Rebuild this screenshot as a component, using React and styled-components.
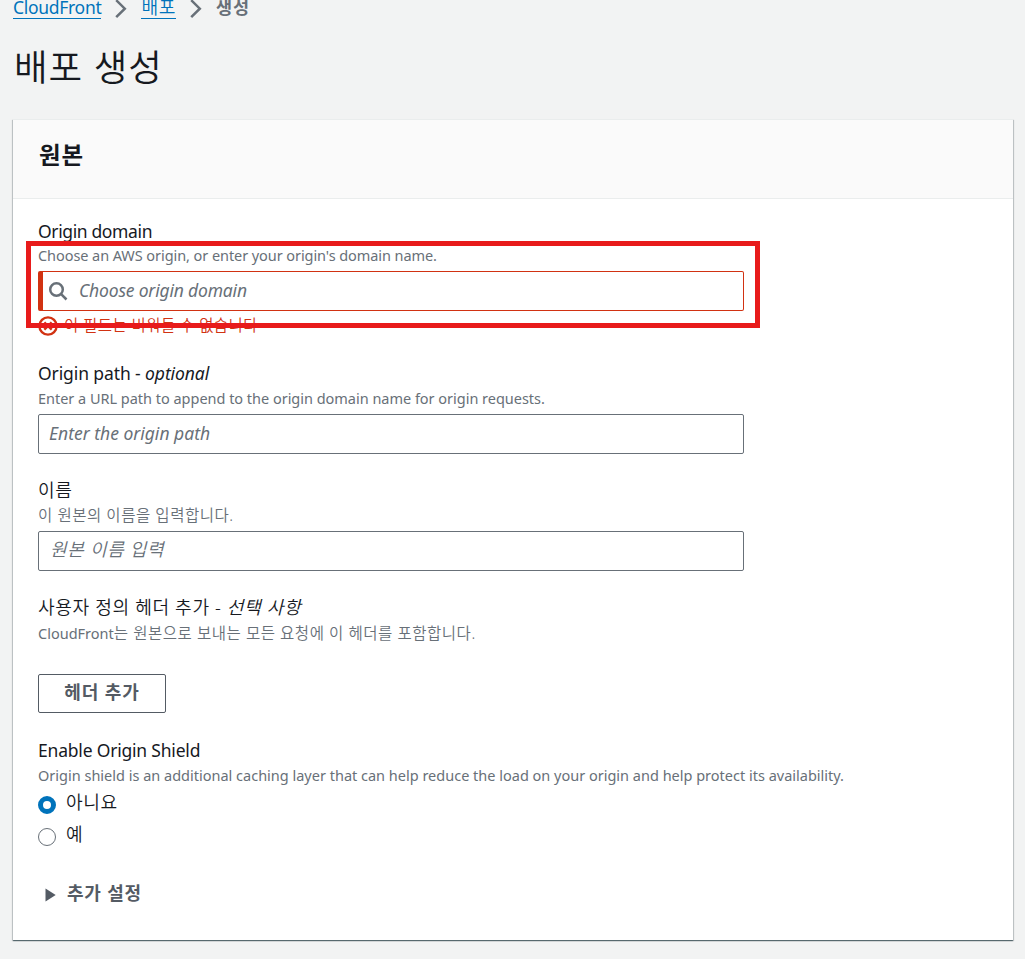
import { useState } from "react";
import styled, { createGlobalStyle, css } from "styled-components";

const App = () => {
  const [shield, setShield] = useState("no");

  return (
    <>
      <GlobalStyle />
      <Page>
        <Breadcrumb>
          <CrumbLink href="#" $track="-0.3px">
            CloudFront
          </CrumbLink>
          <Chevron />
          <CrumbLink href="#" $track="1px">
            <Ko>배포</Ko>
          </CrumbLink>
          <Chevron />
          <CrumbCurrent>생성</CrumbCurrent>
        </Breadcrumb>

        <Title>배포 생성</Title>

        <Card>
          <CardHeader>
            <h2>원본</h2>
          </CardHeader>

          <CardBody>
            <Field>
              <Label $track="-0.37px">Origin domain</Label>
              <Hint $track="-0.07px">
                Choose an AWS origin, or enter your origin's domain name.
              </Hint>
              <InputBox $invalid>
                <SearchIcon />
                <input placeholder="Choose origin domain" />
              </InputBox>
              <ErrorText>
                <ErrorIcon />
                <Ko>이 필드는 비워둘 수 없습니다</Ko>
              </ErrorText>
              <Highlight />
            </Field>

            <Field>
              <Label $track="-0.1px" $lift>
                Origin path - <i>optional</i>
              </Label>
              <Hint $track="-0.02px">
                Enter a URL path to append to the origin domain name for origin
                requests.
              </Hint>
              <InputBox>
                <input placeholder="Enter the origin path" />
              </InputBox>
            </Field>

            <Field>
              <Label $lift>
                <Ko>이름</Ko>
              </Label>
              <Hint>
                <Ko>이 원본의 이름을 입력합니다.</Ko>
              </Hint>
              <InputBox $korean>
                <input placeholder="원본 이름 입력" />
              </InputBox>
            </Field>

            <Field>
              <Label $lift>
                <Ko>
                  사용자 정의 헤더 추가 - <i>선택 사항</i>
                </Ko>
              </Label>
              <Hint $drop>
                CloudFront
                <Ko>는 원본으로 보내는 모든 요청에 이 헤더를 포함합니다.</Ko>
              </Hint>
              <AddButton>헤더 추가</AddButton>
            </Field>

            <Field>
              <Label $track="-0.2px" $lift>
                Enable Origin Shield
              </Label>
              <Hint>
                Origin shield is an additional caching layer that can help
                reduce the load on your origin and help protect its
                availability.
              </Hint>
              <RadioGroup>
                <RadioRow onClick={() => setShield("no")}>
                  <RadioDot $checked={shield === "no"} />
                  <Ko>아니요</Ko>
                </RadioRow>
                <RadioRow onClick={() => setShield("yes")}>
                  <RadioDot $checked={shield === "yes"} />
                  <Ko>예</Ko>
                </RadioRow>
              </RadioGroup>
            </Field>

            <Expander>
              <Caret />
              <span>추가 설정</span>
            </Expander>
          </CardBody>
        </Card>
      </Page>
    </>
  );
};

const Chevron = () => (
  <svg width="12" height="20" viewBox="0 0 12 20" fill="none">
    <path d="M1.2 1.2 L9.8 9.7 L1.2 18.2" stroke="#687078" strokeWidth="2.5" />
  </svg>
);

const SearchIcon = () => (
  <svg width="20" height="20" viewBox="0 0 20 20" fill="none">
    <circle cx="8.5" cy="8.5" r="6.3" stroke="#687078" strokeWidth="2.5" />
    <path d="M12.9 12.9 L18.5 18.5" stroke="#687078" strokeWidth="2.5" />
  </svg>
);

const ErrorIcon = () => (
  <svg width="20" height="20" viewBox="0 0 20 20" fill="none">
    <circle cx="10" cy="10" r="8.6" stroke="#d13212" strokeWidth="2.4" />
    <path
      d="M6.3 6.3 L13.7 13.7 M13.7 6.3 L6.3 13.7"
      stroke="#d13212"
      strokeWidth="2.4"
    />
  </svg>
);

const Caret = () => (
  <svg width="11" height="14" viewBox="0 0 11 14">
    <path d="M0.5 0.5 L10.7 7 L0.5 13.5 Z" fill="#545b64" />
  </svg>
);

const GlobalStyle = createGlobalStyle`
  * {
    box-sizing: border-box;
  }

  body {
    margin: 0;
    background: #f2f3f3;
    color: #16191f;
    font-family: "Noto Sans", "Noto Sans CJK KR", sans-serif;
    font-size: 17.5px;
  }
`;

const Ko = styled.span`
  font-size: 1.035em;
  font-weight: 350;
  letter-spacing: 0.035em;
`;

const Page = styled.div`
  height: 959px;
  padding: 0 12px 0 13px;
  overflow: hidden;
`;

const Breadcrumb = styled.nav`
  display: flex;
  align-items: flex-start;
  height: 20px;

  svg {
    flex: none;
    margin: -1px 14px 0;
  }
`;

const crumb = css`
  height: 23px;
  margin-top: -4px;
  line-height: 23px;
  white-space: nowrap;
`;

const CrumbLink = styled.a`
  ${crumb}
  color: #0073bb;
  text-decoration: none;
  border-bottom: 1px solid #0073bb;
  letter-spacing: ${(props) => props.$track || "0"};
`;

const CrumbCurrent = styled.span`
  ${crumb}
  color: #687078;
  font-weight: 700;
  letter-spacing: 1px;
`;

const Title = styled.h1`
  height: 50px;
  margin: 22px 0 27px 1px;
  font-size: 36.5px;
  font-weight: 350;
  line-height: 50px;
  letter-spacing: 1px;
`;

const Card = styled.section`
  height: 821px;
  background: #fff;
  box-shadow: 0 1px 1px 0 rgba(0, 28, 36, 0.5),
    1px 1px 1px 0 rgba(0, 28, 36, 0.15), -1px 1px 1px 0 rgba(0, 28, 36, 0.15);
`;

const CardHeader = styled.header`
  display: flex;
  height: 80px;
  padding: 19px 26px;
  background: #fafafa;
  border-top: 1px solid #eaeded;
  border-bottom: 1px solid #eaeded;

  h2 {
    margin: 0;
    font-size: 23.5px;
    font-weight: 700;
    line-height: 32px;
    letter-spacing: 0.8px;
  }
`;

const CardBody = styled.div`
  display: flex;
  flex-direction: column;
  gap: 25px;
  padding: 20px 25px;
`;

const Field = styled.div`
  position: relative;
  display: flex;
  flex-direction: column;
`;

const Label = styled.div`
  height: 25px;
  line-height: ${(props) => (props.$lift ? "22.5px" : "24px")};
  white-space: nowrap;
  letter-spacing: ${(props) => props.$track || "0"};
`;

const Hint = styled.div`
  height: 23px;
  margin-bottom: 4px;
  color: #687078;
  font-size: 14.5px;
  line-height: ${(props) => (props.$drop ? "25px" : "23px")};
  white-space: nowrap;
  letter-spacing: ${(props) => props.$track || "0"};

  ${Ko} {
    font-size: 15.5px;
  }
`;

const InputBox = styled.div`
  display: flex;
  align-items: center;
  gap: 11px;
  width: 706px;
  height: 40px;
  padding: 0 10px;
  border: 1px solid #687078;
  border-radius: 2px;

  input {
    flex: 1;
    padding: 0 0 2px;
    border: none;
    outline: none;
    background: transparent;
    font: inherit;
  }

  input::placeholder {
    color: #687078;
    font-style: italic;
    opacity: 1;
  }

  ${(props) =>
    props.$korean &&
    css`
      padding-left: 11px;

      input {
        padding-bottom: 4px;
        font-size: 18px;
        font-weight: 350;
        letter-spacing: 0.7px;
      }
    `}

  ${(props) =>
    props.$invalid &&
    css`
      padding-left: 5px;
      border-color: #d13212;
      border-left-width: 5px;

      input {
        letter-spacing: -0.18px;
      }
    `}
`;

const ErrorText = styled.div`
  display: flex;
  align-items: center;
  gap: 6px;
  height: 22px;
  margin-top: 4px;
  color: #d13212;
  font-size: 15px;
  line-height: 20px;

  ${Ko} {
    height: 22px;
    letter-spacing: 0.4px;
  }
`;

const Highlight = styled.div`
  position: absolute;
  top: 22px;
  left: -12px;
  width: 734px;
  height: 87px;
  border: 5px solid #e81b1b;
  pointer-events: none;
`;

const AddButton = styled.button`
  align-self: flex-start;
  width: 128px;
  height: 39px;
  margin: 26px 0 1px;
  padding: 0 0 6px;
  border: 1px solid #545b64;
  border-radius: 2px;
  background: #fff;
  color: #545b64;
  font: inherit;
  font-size: 18px;
  font-weight: 700;
  letter-spacing: 0.9px;
`;

const RadioGroup = styled.div`
  display: flex;
  flex-direction: column;
  gap: 6px;
`;

const RadioRow = styled.div`
  display: flex;
  align-items: center;
  gap: 10px;
  height: 26px;

  span {
    height: 26px;
    line-height: 23px;
  }
`;

const RadioDot = styled.div`
  width: 18px;
  height: 18px;
  margin-top: 1px;
  border: ${(props) =>
    props.$checked ? "5px solid #0073bb" : "1px solid #687078"};
  border-radius: 50%;
  background: #fff;
`;

const Expander = styled.div`
  display: flex;
  align-items: center;
  gap: 11px;
  height: 26px;
  margin-top: 8px;
  padding-left: 7px;
  color: #545b64;
  font-size: 18px;
  font-weight: 700;
  letter-spacing: 0.8px;

  span {
    height: 26px;
    line-height: 23px;
  }
`;

export default App;
